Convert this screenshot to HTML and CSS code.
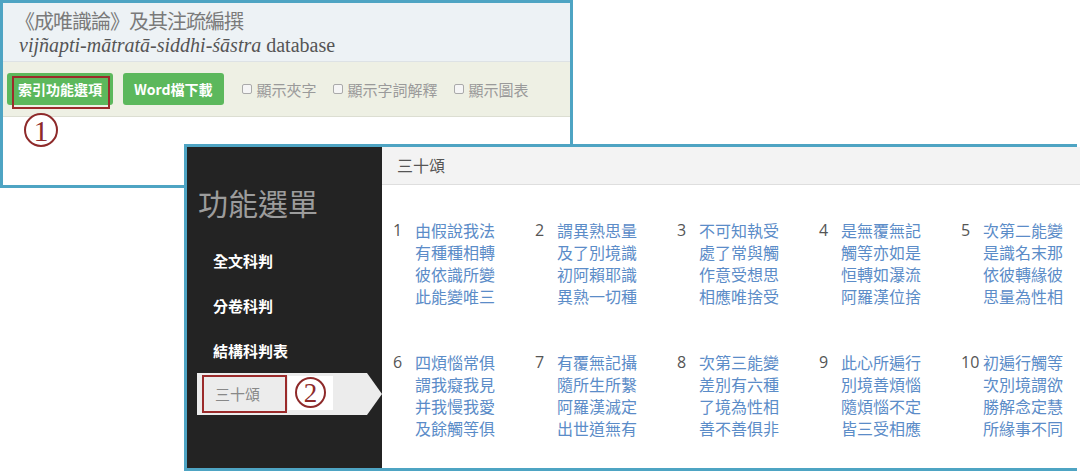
FILE: index.html
```html
<!DOCTYPE html>
<html>
	<head lang="zh-Hant">
		<meta charset="UTF-8">
		<title>成唯識論 功能選單</title>
		<link rel="stylesheet" href="styles.css">
	</head>
	<body>
		<div class="canvas">

			<!-- 上方視窗：網站標題與工具列 -->
			<div class="win win-top">
				<div class="site-head">
					<h1 class="site-title">《成唯識論》及其注疏編撰</h1>
					<p class="site-sub"><i>vijñapti-mātratā-siddhi-śāstra</i> database</p>
				</div>
				<div class="toolbar">
					<span class="btn">索引功能選項</span>
					<span class="btn">Word檔下載</span>
					<label class="chk"><span class="chk-box"></span>顯示夾字</label>
					<label class="chk"><span class="chk-box"></span>顯示字詞解釋</label>
					<label class="chk"><span class="chk-box"></span>顯示圖表</label>
				</div>
				<span class="mark mark-btn"></span>
				<span class="circ circ-1">1</span>
			</div>

			<!-- 下方視窗：功能選單與三十頌 -->
			<div class="win win-menu">
				<div class="side">
					<div class="side-title">功能選單</div>
					<ul class="menu">
						<li>全文科判</li>
						<li>分卷科判</li>
						<li>結構科判表</li>
						<li class="active">
							三十頌
							<span class="mark mark-item"></span>
							<span class="circ-wrap"><span class="circ circ-2">2</span></span>
						</li>
					</ul>
				</div>
				<div class="main">
					<div class="main-head">三十頌</div>
					<div class="verses">
						<div class="verse"><span class="no">1</span><div class="lines">由假說我法<br>有種種相轉<br>彼依識所變<br>此能變唯三</div></div>
						<div class="verse"><span class="no">2</span><div class="lines">謂異熟思量<br>及了別境識<br>初阿賴耶識<br>異熟一切種</div></div>
						<div class="verse"><span class="no">3</span><div class="lines">不可知執受<br>處了常與觸<br>作意受想思<br>相應唯捨受</div></div>
						<div class="verse"><span class="no">4</span><div class="lines">是無覆無記<br>觸等亦如是<br>恒轉如瀑流<br>阿羅漢位捨</div></div>
						<div class="verse"><span class="no">5</span><div class="lines">次第二能變<br>是識名末那<br>依彼轉緣彼<br>思量為性相</div></div>
						<div class="verse"><span class="no">6</span><div class="lines">四煩惱常俱<br>謂我癡我見<br>并我慢我愛<br>及餘觸等俱</div></div>
						<div class="verse"><span class="no">7</span><div class="lines">有覆無記攝<br>隨所生所繫<br>阿羅漢滅定<br>出世道無有</div></div>
						<div class="verse"><span class="no">8</span><div class="lines">次第三能變<br>差別有六種<br>了境為性相<br>善不善俱非</div></div>
						<div class="verse"><span class="no">9</span><div class="lines">此心所遍行<br>別境善煩惱<br>隨煩惱不定<br>皆三受相應</div></div>
						<div class="verse"><span class="no">10</span><div class="lines">初遍行觸等<br>次別境謂欲<br>勝解念定慧<br>所緣事不同</div></div>
					</div>
				</div>
			</div>

		</div>
	</body>
</html>
```

FILE: styles.css
```css
*{
	padding: 0;
	margin: 0;
	box-sizing: border-box;
}
body{
	background: #fff;
	font-family: "Noto Sans CJK TC", "Liberation Sans", sans-serif;
}
.canvas{
	position: relative;
	width: 1080px;
	height: 473px;
	overflow: hidden;
}

/* 視窗外框 */
.win{
	position: absolute;
	border: 3px solid #4ea4c3;
	background: #fff;
}
.win-top{
	left: 0;
	top: 0;
	width: 573px;
	height: 188px;
}
.win-menu{
	left: 184px;
	top: 144px;
	width: 893px;
	height: 327px;
	display: flex;
}

/* 標題 */
.site-head{
	height: 59px;
	background: #edf2f5;
	border-bottom: 1px solid #dde2e5;
	padding: 5px 0 0 12px;
}
.site-title{
	font-size: 20px;
	font-weight: normal;
	line-height: 26px;
	letter-spacing: -1px;
	color: #7a7a7a;
}
.site-sub{
	font-family: "Liberation Serif", serif;
	font-size: 20px;
	line-height: 23px;
	color: #555;
	padding-left: 4px;
}

/* 工具列 */
.toolbar{
	height: 55px;
	background: #eef0e4;
	border-bottom: 1px solid #dcded2;
	display: flex;
	align-items: center;
	padding-left: 4px;
}
.btn{
	display: block;
	height: 32px;
	line-height: 32px;
	padding: 0 11px;
	margin-right: 10px;
	background: #5cb85c;
	border-radius: 3px;
	color: #fff;
	font-size: 14px;
	font-weight: bold;
}
.chk{
	display: flex;
	align-items: center;
	font-size: 15px;
	color: #9a9a9a;
	margin-left: 8px;
	margin-right: 8px;
}
.chk-box{
	width: 10px;
	height: 10px;
	border: 1px solid #aaa;
	border-radius: 2px;
	background: #f5f5f5;
	margin-right: 5px;
}

/* 標註框與圈號 */
.mark{
	position: absolute;
	border: 2px solid #9b2b2b;
}
.mark-btn{
	left: 9px;
	top: 73px;
	width: 98px;
	height: 33px;
}
.circ{
	position: absolute;
	width: 34px;
	height: 34px;
	border: 2px solid #8e2a2a;
	border-radius: 50%;
	color: #8e2a2a;
	font-family: "Liberation Serif", serif;
	font-size: 30px;
	line-height: 31px;
	text-align: center;
	background: #fff;
}
.circ-1{
	left: 21px;
	top: 110px;
}

/* 側邊選單 */
.side{
	width: 195px;
	flex: none;
	background: #232323;
	padding-top: 35px;
}
.side-title{
	font-size: 30px;
	line-height: 40px;
	color: #9c9c9c;
	padding-left: 11px;
}
.menu{
	list-style: none;
	margin-top: 16px;
}
.menu li{
	position: relative;
	height: 45px;
	line-height: 45px;
	padding-left: 26px;
	color: #fff;
	font-size: 15px;
	font-weight: bold;
}
.menu li.active{
	height: 42px;
	line-height: 42px;
	width: 170px;
	margin-left: 10px;
	padding-left: 18px;
	background: #ececec;
	color: #888;
	font-weight: normal;
}
.menu li.active:after{
	content: "";
	position: absolute;
	right: -15px;
	top: 0;
	border-left: 15px solid #ececec;
	border-top: 21px solid transparent;
	border-bottom: 21px solid transparent;
}
.mark-item{
	left: 5px;
	top: 2px;
	width: 85px;
	height: 38px;
}
.circ-wrap{
	position: absolute;
	left: 91px;
	top: 3px;
	width: 45px;
	height: 34px;
	background: #fff;
}
.circ-2{
	left: 7px;
	top: 1px;
	width: 31px;
	height: 31px;
	font-size: 27px;
	line-height: 28px;
}

/* 三十頌內容 */
.main{
	flex: 1;
	background: #fff;
}
.main-head{
	height: 38px;
	line-height: 37px;
	background: #f3f3f3;
	border-bottom: 1px solid #dedede;
	padding-left: 15px;
	font-size: 16px;
	color: #555;
}
.verses{
	display: grid;
	grid-template-columns: repeat(5, 142px);
	row-gap: 44px;
	padding: 34px 0 0 11px;
}
.verse{
	display: flex;
}
.verse .no{
	width: 22px;
	flex: none;
	font-family: "Open Sans", "Liberation Sans", sans-serif;
	font-size: 16px;
	line-height: 22px;
	color: #555;
}
.verse .lines{
	font-size: 16px;
	line-height: 22px;
	color: #5b8cc8;
}
```
